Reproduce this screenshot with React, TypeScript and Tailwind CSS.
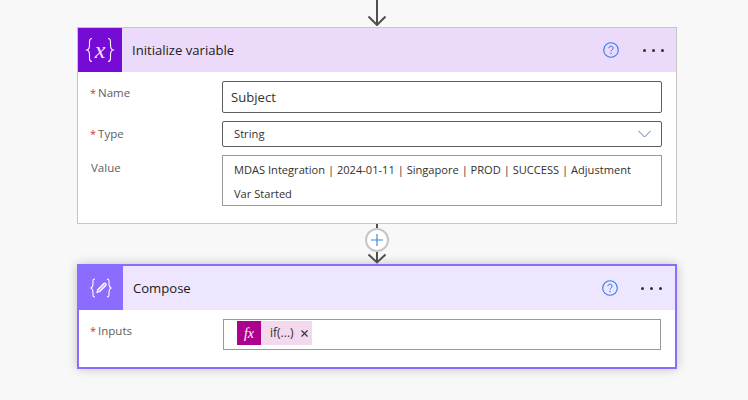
const font = "font-['Open_Sans',sans-serif]"

function HelpIcon() {
  return (
    <svg width="16" height="16" viewBox="0 0 16 16" fill="none">
      <circle cx="8" cy="8" r="7.300" stroke="#2f7bf5" strokeWidth="1.100" />
      <path d="M5.900 6.200C5.900 5 6.800 4.200 8 4.200s2.100.8 2.100 1.900c0 1.800-2.100 1.700-2.100 3.400" stroke="#2f6fe0" strokeWidth="1" />
      <circle cx="8" cy="11.500" r="0.700" fill="#2f6fe0" />
    </svg>
  )
}

function Dots() {
  return (
    <div className="flex items-center gap-[6px]">
      <span className="w-[3px] h-[3px] rounded-full bg-[#323130]" />
      <span className="w-[3px] h-[3px] rounded-full bg-[#323130]" />
      <span className="w-[3px] h-[3px] rounded-full bg-[#323130]" />
    </div>
  )
}

function Arrow({ height }: { height: number }) {
  return (
    <svg width="20" height={height} viewBox={`0 0 20 ${height}`} fill="none">
      <path d={`M10 0V${height - 1}M1.500 ${height - 9.500}L10 ${height - 1}L18.500 ${height - 9.500}`} stroke="#4f4f4f" strokeWidth="2" />
    </svg>
  )
}

function Label({ text, top, required = true }: { text: string; top: string; required?: boolean }) {
  return (
    <div className={`w-[131px] shrink-0 text-[11.500px] leading-[16px] text-[#605e5c] ${top}`}>
      {required && <span className="text-[#d13438] text-[11px] mr-[2px]">*</span>}
      {text}
    </div>
  )
}

function VariableIcon() {
  return (
    <div className="flex items-center text-white">
      <svg width="10" height="26" viewBox="0 0 10 26" fill="none" stroke="#fff" strokeWidth="1.100">
        <path d="M8 1.500C5 1.500 5.500 4.500 5.500 8c0 3-.7 4.500-2.500 5 1.800.5 2.500 2 2.500 5 0 3.500-.5 6.500 2.500 6.500" />
      </svg>
      <span className="w-[12px] text-center text-[24px] leading-[26px] italic font-['Liberation_Serif',serif] font-thin opacity-90">x</span>
      <svg width="10" height="26" viewBox="0 0 10 26" fill="none" stroke="#fff" strokeWidth="1.100">
        <path d="M2 1.500c3 0 2.500 3 2.500 6.500 0 3 .7 4.500 2.500 5-1.800.5-2.500 2-2.500 5 0 3.500.5 6.500-2.500 6.500" />
      </svg>
    </div>
  )
}

function ComposeIcon() {
  return (
    <svg width="24" height="24" viewBox="0 0 24 24" fill="none" stroke="#fff" strokeWidth="1.100">
      <path d="M6 3C3.500 3 4 5 4 8c0 2-.6 3.400-2 4 1.400.6 2 2 2 4 0 3-.5 5 2 5" />
      <path d="M18 3c2.500 0 2 2 2 5 0 2 .6 3.400 2 4-1.400.6-2 2-2 4 0 3 .5 5-2 5" />
      <path d="M8 16.500l.8-3 6-6c.6-.6 1.500-.6 2 0s.6 1.400 0 2l-6 6z" fill="#fff" fillOpacity="0.45" />
    </svg>
  )
}

export default function App() {
  return (
    <div className={`w-[748px] h-[400px] overflow-hidden bg-[#f8f8f8] pl-[77px] ${font}`}>
      <div className="w-[600px] h-[27px] flex justify-center">
        <Arrow height={26} />
      </div>

      {/* Initialize variable */}
      <div className="w-[600px] h-[197px] bg-white border border-[#c8c6c4]">
        <div className="h-[44px] flex items-center bg-[#ecdafb]">
          <div className="w-[44px] h-[44px] bg-[#770bd6] flex items-center justify-center">
            <VariableIcon />
          </div>
          <div className="ml-[10px] mt-[1px] text-[13.100px] text-[#1b1a19]">Initialize variable</div>
          <div className="ml-auto flex items-center">
            <HelpIcon />
            <div className="ml-[24px] mr-[12px]"><Dots /></div>
          </div>
        </div>
        <div className="pl-[12px] pt-[9px] flex flex-col gap-[8px]">
          <div className="flex">
            <Label text="Name" top="pt-[4px]" />
            <div className="ml-[1px] w-[440px] h-[32px] border border-[#605e5c] rounded-[2px] flex items-center pl-[8px] pt-[2px] text-[13.100px] text-[#323130]">Subject</div>
          </div>
          <div className="flex">
            <Label text="Type" top="pt-[5px]" />
            <div className="ml-[1px] w-[440px] h-[26px] border border-[#605e5c] rounded-[2px] flex items-center pl-[11px] pr-[10px] text-[11.200px] text-[#323130]">
              String
              <svg className="ml-auto" width="13" height="8" viewBox="0 0 13 8" fill="none">
                <path d="M.5 1l6 6 6-6" stroke="#5a7f9c" strokeWidth="1" />
              </svg>
            </div>
          </div>
          <div className="flex">
            <Label text="Value" top="pt-[5px] pl-[1px]" required={false} />
            <div className="ml-[1px] w-[440px] h-[51px] border border-[#999999] pl-[11px] pt-[2px] text-[11.100px] leading-[24px] text-[#323130] whitespace-nowrap">
              MDAS Integration | 2024-01-11 | Singapore | PROD | SUCCESS | Adjustment
              <br />
              Var Started
            </div>
          </div>
        </div>
      </div>

      {/* connector with the add button */}
      <div className="relative w-[600px] h-[40px] flex justify-center">
        <div className="flex flex-col items-center">
          <div className="h-[4px] w-[2px] bg-[#4f4f4f]" />
          <div className="w-[24px] h-[24px] rounded-full bg-white border-2 border-[#c8c6c4] flex items-center justify-center">
            <svg width="12" height="12" viewBox="0 0 12 12" fill="none">
              <path d="M6 0v12M0 6h12" stroke="#3f87e0" strokeWidth="1.200" />
            </svg>
          </div>
          <svg width="20" height="12" viewBox="0 0 20 12" fill="none">
            <path d="M10 0v10M1.500 2.500L10 10.500L18.500 2.500" stroke="#4f4f4f" strokeWidth="2" />
          </svg>
        </div>
      </div>

      {/* Compose */}
      <div className="w-[600px] h-[105px] bg-white border-2 border-[#8c6cff] shadow-[0_0_10px_rgba(0,0,0,0.22)]">
        <div className="h-[44px] flex items-center bg-[#ede6fe]">
          <div className="w-[44px] h-[44px] bg-[#8c6cff] flex items-center justify-center">
            <ComposeIcon />
          </div>
          <div className="ml-[10px] mt-[1px] text-[13.100px] text-[#1b1a19]">Compose</div>
          <div className="ml-auto flex items-center">
            <HelpIcon />
            <div className="ml-[23px] mr-[13px]"><Dots /></div>
          </div>
        </div>
        <div className="pl-[11px] pt-[9px] flex">
          <Label text="Inputs" top="pt-[4px]" />
          <div className="ml-[2px] w-[438px] h-[31px] border border-[#999999] pl-[13px] pt-[1px]">
            <div className="w-[75px] h-[24px] bg-[#f3d9ed] flex items-center text-[12px] text-[#323130]">
              <div className="w-[24px] h-[24px] bg-[#ad008c] flex items-center justify-center text-white text-[14px] italic font-['Liberation_Serif',serif]">fx</div>
              <span className="ml-[9px]">if(...)</span>
              <svg className="ml-[7px]" width="7" height="7" viewBox="0 0 7 7" fill="none">
                <path d="M.5.500l6 6M6.500.500l-6 6" stroke="#323130" strokeWidth="1.100" />
              </svg>
            </div>
          </div>
        </div>
      </div>
    </div>
  )
}
